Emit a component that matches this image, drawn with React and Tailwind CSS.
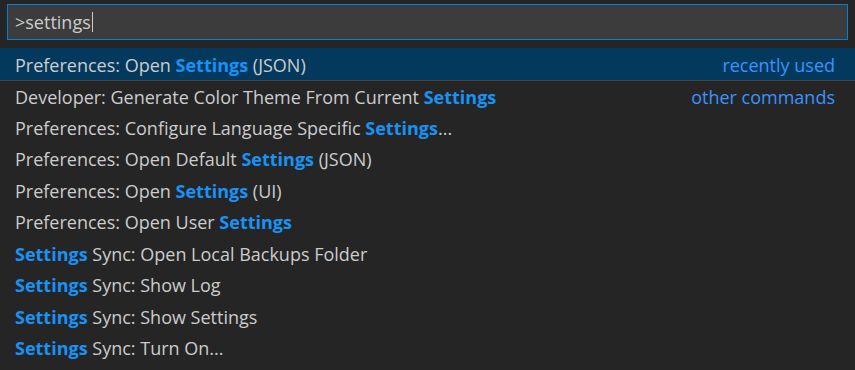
const rows = [
  { parts: ['Preferences: Open ', 'Settings', ' (JSON)'], tag: 'recently used', selected: true },
  { parts: ['Developer: Generate Color Theme From Current ', 'Settings', ''], tag: 'other commands', divider: true },
  { parts: ['Preferences: Configure Language Specific ', 'Settings', '...'] },
  { parts: ['Preferences: Open Default ', 'Settings', ' (JSON)'] },
  { parts: ['Preferences: Open ', 'Settings', ' (UI)'] },
  { parts: ['Preferences: Open User ', 'Settings', ''] },
  { parts: ['', 'Settings', ' Sync: Open Local Backups Folder'] },
  { parts: ['', 'Settings', ' Sync: Show Log'] },
  { parts: ['', 'Settings', ' Sync: Show Settings'] },
  { parts: ['', 'Settings', ' Sync: Turn On...'] },
];

function Row({ row }) {
  return (
    <div
      className={`flex items-center justify-between pl-[15px] pr-[20px] ${row.selected ? 'h-[32px] bg-[#04395e]' : 'h-[31.5px]'} ${row.divider ? 'border-t border-[#454545]' : ''}`}
    >
      <span className="whitespace-pre pt-px text-[#cccccc]">
        {row.parts[0]}
        <span className="font-bold text-[#1793f5]">{row.parts[1]}</span>
        {row.parts[2]}
      </span>
      {row.tag && <span className="pt-px text-[#3794ff]">{row.tag}</span>}
    </div>
  );
}

export default function App() {
  return (
    <div
      className="w-[855px] h-[370px] overflow-hidden bg-[#252526] text-[18px] leading-[24px]"
      style={{ fontFamily: '"Open Sans", sans-serif' }}
    >
      <div className="px-[7px] pt-1">
        <div className="flex h-[36px] items-center border border-[#007fd4] bg-[#3c3c3c] pl-[7px] text-[#cccccc]">
          <span>&gt;settings</span>
          <span className="ml-px h-[20px] w-px bg-[#cccccc]" />
        </div>
      </div>
      <div className="mt-2">
        {rows.map((row, i) => (
          <Row key={i} row={row} />
        ))}
      </div>
    </div>
  );
}
